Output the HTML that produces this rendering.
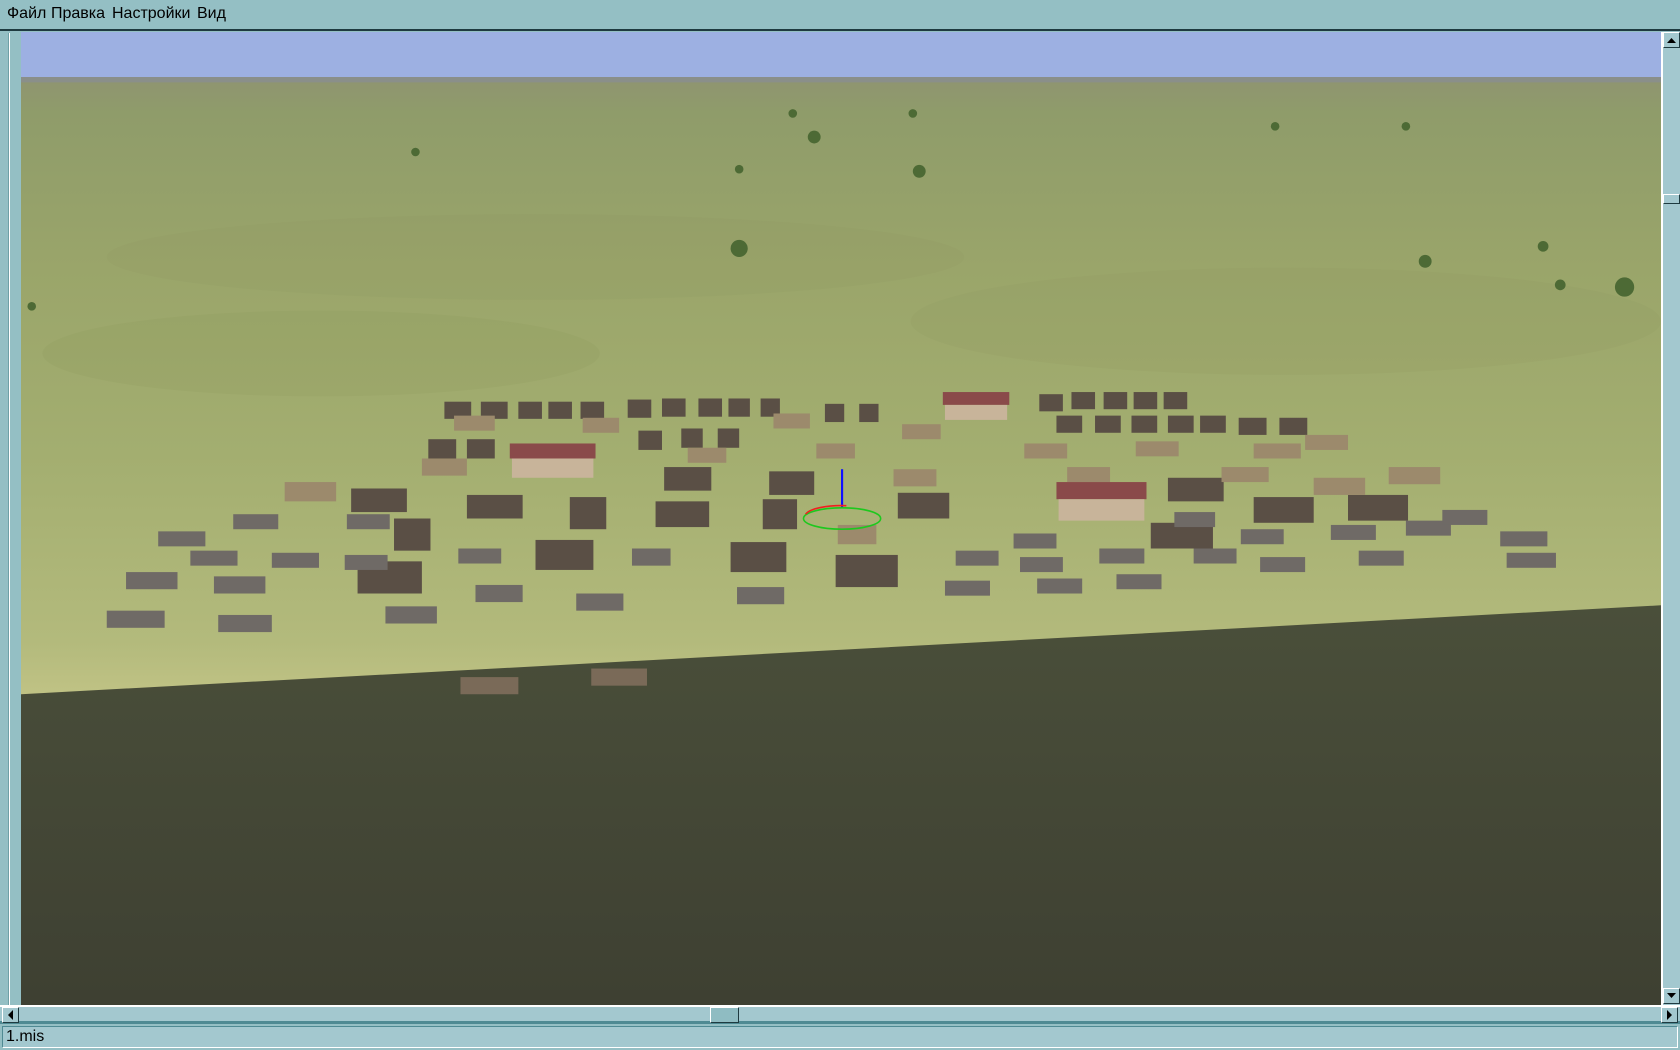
<!DOCTYPE html>
<html><head><meta charset="utf-8"><style>
*{margin:0;padding:0;box-sizing:border-box}
body{width:1680px;height:1050px;background:#94bfc4;position:relative;overflow:hidden;font-family:"Liberation Sans",sans-serif}
#menu{position:absolute;left:0;top:0;width:1680px;height:31px;background:#94bfc4;border-bottom:2px solid #1e3a40;font-size:16px;color:#000}
#menu span{position:absolute;top:5px}
#lp{position:absolute;left:0;top:33px;width:21px;height:973px;background:#94bfc4}
#lp .l{position:absolute;left:9px;top:0;width:1px;height:973px;background:#fff}
#lp .r{position:absolute;left:8px;top:0;width:1px;height:973px;background:#6fa0a6}
#vp{position:absolute;left:21px;top:32px;width:1640px;height:973px}
#vs{position:absolute;left:1661px;top:32px;width:19px;height:974px;background:#a3c8cf;border-left:2px solid #fff}
.btn{position:absolute;width:17px;height:16px;background:#a3c8cf;border:1px solid;border-color:#fff #1e3a40 #1e3a40 #fff}
#hs{position:absolute;left:0;top:1005px;width:1680px;height:19px;background:#a3c8cf;border-top:2px solid #fff;border-bottom:3px solid #4f8a93}
#st{position:absolute;left:2px;top:1026px;width:1676px;height:22px;border:1px solid;border-color:#4f8a93 #fff #fff #4f8a93;background:#a3c8cf;font-size:16px;padding-left:3px;line-height:20px}
</style></head><body>
<div id="menu"><span style="left:7px">Файл</span><span style="left:51px">Правка</span><span style="left:112px">Настройки</span><span style="left:197px">Вид</span></div>
<div id="lp"><div class="r"></div><div class="l"></div></div>
<svg id="vp" viewBox="20 30 1530 908" preserveAspectRatio="none" xmlns="http://www.w3.org/2000/svg">
<defs>
<linearGradient id="g" x1="0" y1="0" x2="0" y2="1">
<stop offset="0" stop-color="#8f9570"/><stop offset="0.05" stop-color="#8f9c6a"/><stop offset="0.3" stop-color="#9aa56a"/><stop offset="0.6" stop-color="#a3ae70"/><stop offset="0.9" stop-color="#b3ba7c"/><stop offset="1" stop-color="#c2c486"/></linearGradient>
<linearGradient id="w" x1="0" y1="0" x2="0" y2="1"><stop offset="0" stop-color="#4a4f3a"/><stop offset="1" stop-color="#3e4032"/></linearGradient>
</defs>
<rect x="20" y="30" width="1530" height="45" fill="#9db0e2"/>
<rect x="20" y="72" width="1530" height="6" fill="#8a8f8a"/>
<rect x="20" y="77" width="1530" height="580" fill="url(#g)"/>
<ellipse cx="500" cy="240" rx="400" ry="40" fill="#8a9560" opacity=".15"/>
<ellipse cx="1200" cy="300" rx="350" ry="50" fill="#8a9560" opacity=".15"/>
<ellipse cx="300" cy="330" rx="260" ry="40" fill="#899458" opacity=".15"/>
<polygon points="20,648 1550,565 1550,938 20,938" fill="url(#w)"/>
<g fill="#5a4f45">
<rect x="415" y="375" width="25" height="16"/><rect x="449" y="375" width="25" height="16"/><rect x="484" y="375" width="22" height="16"/><rect x="512" y="375" width="22" height="16"/><rect x="542" y="375" width="22" height="16"/><rect x="586" y="373" width="22" height="17"/><rect x="618" y="372" width="22" height="17"/><rect x="652" y="372" width="22" height="17"/><rect x="680" y="372" width="20" height="17"/><rect x="710" y="372" width="18" height="17"/><rect x="770" y="377" width="18" height="17"/><rect x="802" y="377" width="18" height="17"/>
<rect x="970" y="368" width="22" height="16"/><rect x="1000" y="366" width="22" height="16"/><rect x="1030" y="366" width="22" height="16"/><rect x="1058" y="366" width="22" height="16"/><rect x="1086" y="366" width="22" height="16"/>
<rect x="986" y="388" width="24" height="16"/><rect x="1022" y="388" width="24" height="16"/><rect x="1056" y="388" width="24" height="16"/><rect x="1090" y="388" width="24" height="16"/><rect x="1120" y="388" width="24" height="16"/><rect x="1156" y="390" width="26" height="16"/><rect x="1194" y="390" width="26" height="16"/>
<rect x="400" y="410" width="26" height="18"/><rect x="436" y="410" width="26" height="18"/><rect x="596" y="402" width="22" height="18"/><rect x="636" y="400" width="20" height="18"/><rect x="670" y="400" width="20" height="18"/>
<rect x="620" y="436" width="44" height="22"/><rect x="718" y="440" width="42" height="22"/><rect x="328" y="456" width="52" height="22"/><rect x="436" y="462" width="52" height="22"/><rect x="612" y="468" width="50" height="24"/><rect x="838" y="460" width="48" height="24"/><rect x="1090" y="446" width="52" height="22"/><rect x="1170" y="464" width="56" height="24"/><rect x="1258" y="462" width="56" height="24"/><rect x="1074" y="488" width="58" height="24"/>
<rect x="334" y="524" width="60" height="30"/><rect x="500" y="504" width="54" height="28"/><rect x="682" y="506" width="52" height="28"/><rect x="780" y="518" width="58" height="30"/>
<rect x="368" y="484" width="34" height="30"/><rect x="532" y="464" width="34" height="30"/><rect x="712" y="466" width="32" height="28"/>
</g>
<g fill="#6f6a66">
<rect x="148" y="496" width="44" height="14"/><rect x="218" y="480" width="42" height="14"/><rect x="324" y="480" width="40" height="14"/><rect x="178" y="514" width="44" height="14"/><rect x="254" y="516" width="44" height="14"/><rect x="322" y="518" width="40" height="14"/><rect x="428" y="512" width="40" height="14"/><rect x="118" y="534" width="48" height="16"/><rect x="200" y="538" width="48" height="16"/><rect x="444" y="546" width="44" height="16"/><rect x="100" y="570" width="54" height="16"/><rect x="204" y="574" width="50" height="16"/><rect x="360" y="566" width="48" height="16"/><rect x="538" y="554" width="44" height="16"/><rect x="688" y="548" width="44" height="16"/><rect x="590" y="512" width="36" height="16"/>
<rect x="946" y="498" width="40" height="14"/><rect x="892" y="514" width="40" height="14"/><rect x="952" y="520" width="40" height="14"/><rect x="1026" y="512" width="42" height="14"/><rect x="1114" y="512" width="40" height="14"/><rect x="1158" y="494" width="40" height="14"/><rect x="1176" y="520" width="42" height="14"/><rect x="1242" y="490" width="42" height="14"/><rect x="1268" y="514" width="42" height="14"/><rect x="1312" y="486" width="42" height="14"/><rect x="1346" y="476" width="42" height="14"/><rect x="1400" y="496" width="44" height="14"/><rect x="1406" y="516" width="46" height="14"/><rect x="968" y="540" width="42" height="14"/><rect x="1042" y="536" width="42" height="14"/><rect x="882" y="542" width="42" height="14"/><rect x="1096" y="478" width="38" height="14"/>
</g>
<g fill="#9c8a6c">
<rect x="266" y="450" width="48" height="18"/><rect x="394" y="428" width="42" height="16"/><rect x="424" y="388" width="38" height="14"/><rect x="544" y="390" width="34" height="14"/><rect x="642" y="418" width="36" height="14"/><rect x="722" y="386" width="34" height="14"/><rect x="762" y="414" width="36" height="14"/><rect x="842" y="396" width="36" height="14"/><rect x="834" y="438" width="40" height="16"/><rect x="956" y="414" width="40" height="14"/><rect x="1060" y="412" width="40" height="14"/><rect x="1170" y="414" width="44" height="14"/><rect x="1218" y="406" width="40" height="14"/><rect x="1140" y="436" width="44" height="14"/><rect x="1226" y="446" width="48" height="16"/><rect x="1296" y="436" width="48" height="16"/><rect x="996" y="436" width="40" height="14"/><rect x="782" y="490" width="36" height="18"/>
</g>
<g fill="#8a4a4a"><rect x="880" y="366" width="62" height="12"/><rect x="476" y="414" width="80" height="14"/><rect x="986" y="450" width="84" height="16"/></g>
<g fill="#c8b49a"><rect x="882" y="378" width="58" height="14"/><rect x="478" y="428" width="76" height="18"/><rect x="988" y="466" width="80" height="20"/></g>
<g fill="#7a6a58"><rect x="430" y="632" width="54" height="16"/><rect x="552" y="624" width="52" height="16"/></g>
<g fill="#4d6a35">
<circle cx="690" cy="232" r="8"/><circle cx="1516" cy="268" r="9"/><circle cx="1456" cy="266" r="5"/><circle cx="1330" cy="244" r="6"/><circle cx="1440" cy="230" r="5"/><circle cx="858" cy="160" r="6"/><circle cx="760" cy="128" r="6"/><circle cx="388" cy="142" r="4"/><circle cx="740" cy="106" r="4"/><circle cx="852" cy="106" r="4"/><circle cx="690" cy="158" r="4"/><circle cx="1190" cy="118" r="4"/><circle cx="1312" cy="118" r="4"/><circle cx="30" cy="286" r="4"/>
</g>
<line x1="786" y1="474" x2="786" y2="438" stroke="#1010ff" stroke-width="2"/>
<ellipse cx="786" cy="484" rx="36" ry="10" fill="none" stroke="#1ec81e" stroke-width="1.5"/>
<path d="M752,480 A34,10 0 0 1 790,472" fill="none" stroke="#f02020" stroke-width="1.5"/>
</svg>
<div id="vs">
<div class="btn" style="left:0;top:0"><svg width="15" height="14"><polygon points="3,10 12,10 7.5,5" fill="#000"/></svg></div>
<div class="btn" style="left:0;top:162px;height:10px"></div>
<div class="btn" style="left:0;top:956px"><svg width="15" height="14"><polygon points="3,4 12,4 7.5,9" fill="#000"/></svg></div>
</div>
<div id="hs">
<div class="btn" style="left:2px;top:0"><svg width="15" height="14"><polygon points="10,2 10,12 5,7" fill="#000"/></svg></div>
<div class="btn" style="left:710px;top:0;width:29px;background:#8fbcc2"></div>
<div class="btn" style="left:1661px;top:0"><svg width="15" height="14"><polygon points="5,2 5,12 10,7" fill="#000"/></svg></div>
</div>
<div id="st">1.mis</div>
</body></html>
